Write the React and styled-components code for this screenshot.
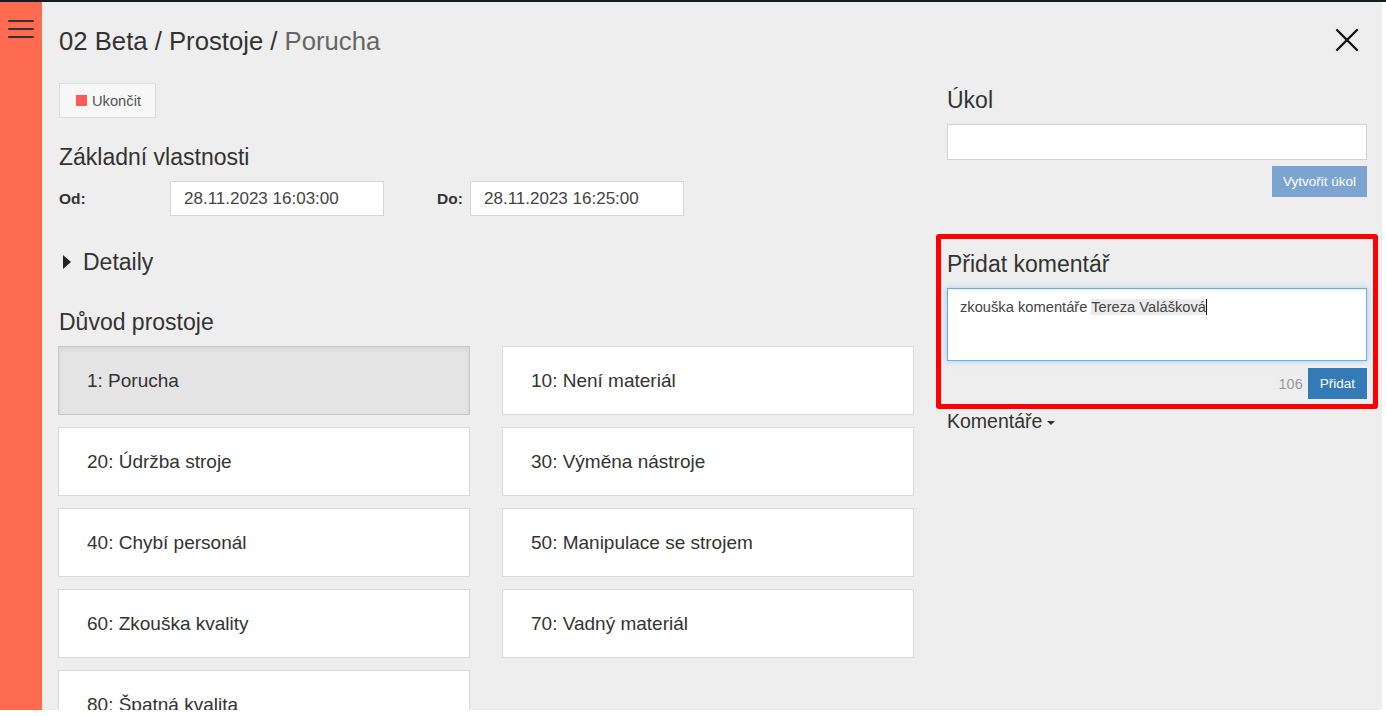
import React from "react";
import styled, { createGlobalStyle } from "styled-components";

const Global = createGlobalStyle`
  html, body { margin: 0; padding: 0; background: #ffffff; }
  body { font-family: "Liberation Sans", Arial, sans-serif; color: #333; }
  * { box-sizing: border-box; }
`;

const Page = styled.div`
  width: 1386px;
  height: 716px;
  overflow: hidden;
  background: #ffffff;
`;

const TopStrip = styled.div`
  height: 2px;
  width: 100%;
  background: #151c22;
`;

const Shell = styled.div`
  display: flex;
  width: 1382px;
  height: 708px;
  overflow: hidden;
`;

const Sidebar = styled.aside`
  width: 42px;
  flex: 0 0 42px;
  background: #ff6b4e;
  padding: 18px 0 0 8px;
`;

const Burger = styled.button`
  display: flex;
  flex-direction: column;
  gap: 6px;
  width: 26px;
  padding: 0;
  border: 0;
  background: transparent;
  span {
    display: block;
    height: 2px;
    background: #333;
    border-radius: 1px;
  }
`;

const Main = styled.main`
  flex: 1;
  background: #eeeeee;
  padding: 0 15px 0 17px;
  overflow: hidden;
`;

const Header = styled.header`
  height: 81px;
  display: flex;
  justify-content: space-between;
  padding-top: 25px;
`;

const Title = styled.h1`
  margin: 0;
  font-size: 25.7px;
  line-height: 29px;
  font-weight: 400;
  color: #333;
`;

const Crumb = styled.span`
  color: ${(p) => (p.$current ? "#666" : "#333")};
`;

const Close = styled.button`
  border: 0;
  background: transparent;
  padding: 0;
  margin: 1px 8px 0 0;
  width: 24px;
  height: 24px;
`;

const Columns = styled.div`
  display: grid;
  grid-template-columns: 856px 420px;
  gap: 32px;
`;

const Column = styled.section`
  display: flex;
  flex-direction: column;
  align-items: flex-start;
`;

const StopButton = styled.button`
  display: flex;
  align-items: center;
  gap: 5px;
  height: 35px;
  padding: 0 14px 0 16px;
  background: #f7f7f7;
  border: 1px solid #dcdcdc;
  font-family: inherit;
  font-size: 14.7px;
  color: #555;
`;

const RedSquare = styled.span`
  width: 11px;
  height: 11px;
  background: #ff5a5a;
`;

const Heading = styled.h2`
  margin: ${(p) => p.$top || 0}px 0 0;
  font-size: 23px;
  line-height: 26px;
  font-weight: 400;
  color: #333;
`;

const DateRow = styled.div`
  display: flex;
  align-items: center;
  margin-top: 11px;
`;

const FieldLabel = styled.label`
  width: ${(p) => p.$w}px;
  font-size: 15.5px;
  font-weight: 700;
  color: #333;
`;

const DateInput = styled.div`
  width: 214px;
  height: 35px;
  display: flex;
  align-items: center;
  padding-left: 13px;
  background: #fff;
  border: 1px solid #d6d6d6;
  font-size: 17px;
  color: #444;
  margin-right: ${(p) => p.$gap || 0}px;
`;

const Toggle = styled.div`
  display: flex;
  align-items: center;
  gap: 12px;
  margin: 33px 0 0 4px;
  font-size: 23px;
  line-height: 26px;
  color: #333;
`;

const Triangle = styled.span`
  width: 0;
  height: 0;
  border-top: 7px solid transparent;
  border-bottom: 7px solid transparent;
  border-left: 8px solid #222;
`;

const ReasonGrid = styled.div`
  display: grid;
  grid-template-columns: 412px 412px;
  column-gap: 32px;
  row-gap: 12px;
  margin: 11px 0 0 -1px;
  width: 857px;
`;

const Reason = styled.button`
  height: 69px;
  display: flex;
  align-items: center;
  padding: 0 0 0 28px;
  font-family: inherit;
  font-size: 19px;
  color: #333;
  text-align: left;
  background: ${(p) => (p.$active ? "#e4e4e4" : "#ffffff")};
  border: 1px solid ${(p) => (p.$active ? "#c8c8c8" : "#dadada")};
  box-shadow: ${(p) => (p.$active ? "inset 0 2px 4px rgba(0,0,0,0.08)" : "none")};
`;

const TextBox = styled.div`
  width: 420px;
  height: 36px;
  margin-top: 11px;
  background: #fff;
  border: 1px solid #d2d2d2;
`;

const Actions = styled.div`
  align-self: stretch;
  display: flex;
  justify-content: flex-end;
  align-items: center;
  gap: 5px;
  margin-top: ${(p) => p.$top}px;
`;

const PrimaryButton = styled.button`
  height: 31px;
  padding: 0 ${(p) => p.$pad}px;
  border: 0;
  background: ${(p) => (p.$muted ? "#7ba5d0" : "#337ab7")};
  color: #fff;
  font-family: inherit;
  font-size: 13.5px;
`;

const Highlight = styled.div`
  align-self: stretch;
  margin: 37px -11px 0;
  border: 5px solid #ff0000;
  border-radius: 3px;
  padding: 12px 6px 5px;
`;

const CommentArea = styled.div`
  height: 73px;
  margin-top: 11px;
  background: #fff;
  border: 1px solid #66afe9;
  box-shadow: inset 0 1px 1px rgba(0,0,0,0.075), 0 0 6px rgba(102,175,233,0.55);
  padding: 9px 12px;
  font-size: 14.7px;
  line-height: 18px;
  color: #444;
`;

const Mention = styled.span`
  background: #ececec;
  border-right: 1px solid #111;
`;

const Counter = styled.span`
  font-size: 14.5px;
  color: #999;
`;

const Dropdown = styled.div`
  display: flex;
  align-items: center;
  gap: 5px;
  margin-top: 1px;
  font-size: 19.5px;
  line-height: 23px;
  color: #333;
`;

const Caret = styled.span`
  width: 0;
  height: 0;
  border-left: 4px solid transparent;
  border-right: 4px solid transparent;
  border-top: 4px solid #333;
  margin-top: 2px;
`;

const reasons = [
  "1: Porucha",
  "10: Není materiál",
  "20: Údržba stroje",
  "30: Výměna nástroje",
  "40: Chybí personál",
  "50: Manipulace se strojem",
  "60: Zkouška kvality",
  "70: Vadný materiál",
  "80: Špatná kvalita",
];

export default function App() {
  return (
    <Page>
      <Global />
      <TopStrip />
      <Shell>
        <Sidebar>
          <Burger aria-label="menu">
            <span />
            <span />
            <span />
          </Burger>
        </Sidebar>
        <Main>
          <Header>
            <Title>
              <Crumb>02 Beta / Prostoje / </Crumb>
              <Crumb $current>Porucha</Crumb>
            </Title>
            <Close aria-label="zavřít">
              <svg width="24" height="24" viewBox="0 0 24 24">
                <path d="M2 2 L22 22 M22 2 L2 22" stroke="#111" strokeWidth="2.3" strokeLinecap="round" />
              </svg>
            </Close>
          </Header>
          <Columns>
            <Column>
              <StopButton>
                <RedSquare />
                Ukončit
              </StopButton>
              <Heading $top={26}>Základní vlastnosti</Heading>
              <DateRow>
                <FieldLabel $w={111}>Od:</FieldLabel>
                <DateInput $gap={53}>28.11.2023 16:03:00</DateInput>
                <FieldLabel $w={33}>Do:</FieldLabel>
                <DateInput>28.11.2023 16:25:00</DateInput>
              </DateRow>
              <Toggle>
                <Triangle />
                Detaily
              </Toggle>
              <Heading $top={34}>Důvod prostoje</Heading>
              <ReasonGrid>
                {reasons.map((r, i) => (
                  <Reason key={r} $active={i === 0}>
                    {r}
                  </Reason>
                ))}
              </ReasonGrid>
            </Column>
            <Column>
              <Heading $top={4}>Úkol</Heading>
              <TextBox />
              <Actions $top={6}>
                <PrimaryButton $muted $pad={11}>Vytvořit úkol</PrimaryButton>
              </Actions>
              <Highlight>
                <Heading>Přidat komentář</Heading>
                <CommentArea>
                  zkouška komentáře <Mention>Tereza Valášková</Mention>
                </CommentArea>
                <Actions $top={7}>
                  <Counter>106</Counter>
                  <PrimaryButton $pad={12}>Přidat</PrimaryButton>
                </Actions>
              </Highlight>
              <Dropdown>
                Komentáře
                <Caret />
              </Dropdown>
            </Column>
          </Columns>
        </Main>
      </Shell>
    </Page>
  );
}
